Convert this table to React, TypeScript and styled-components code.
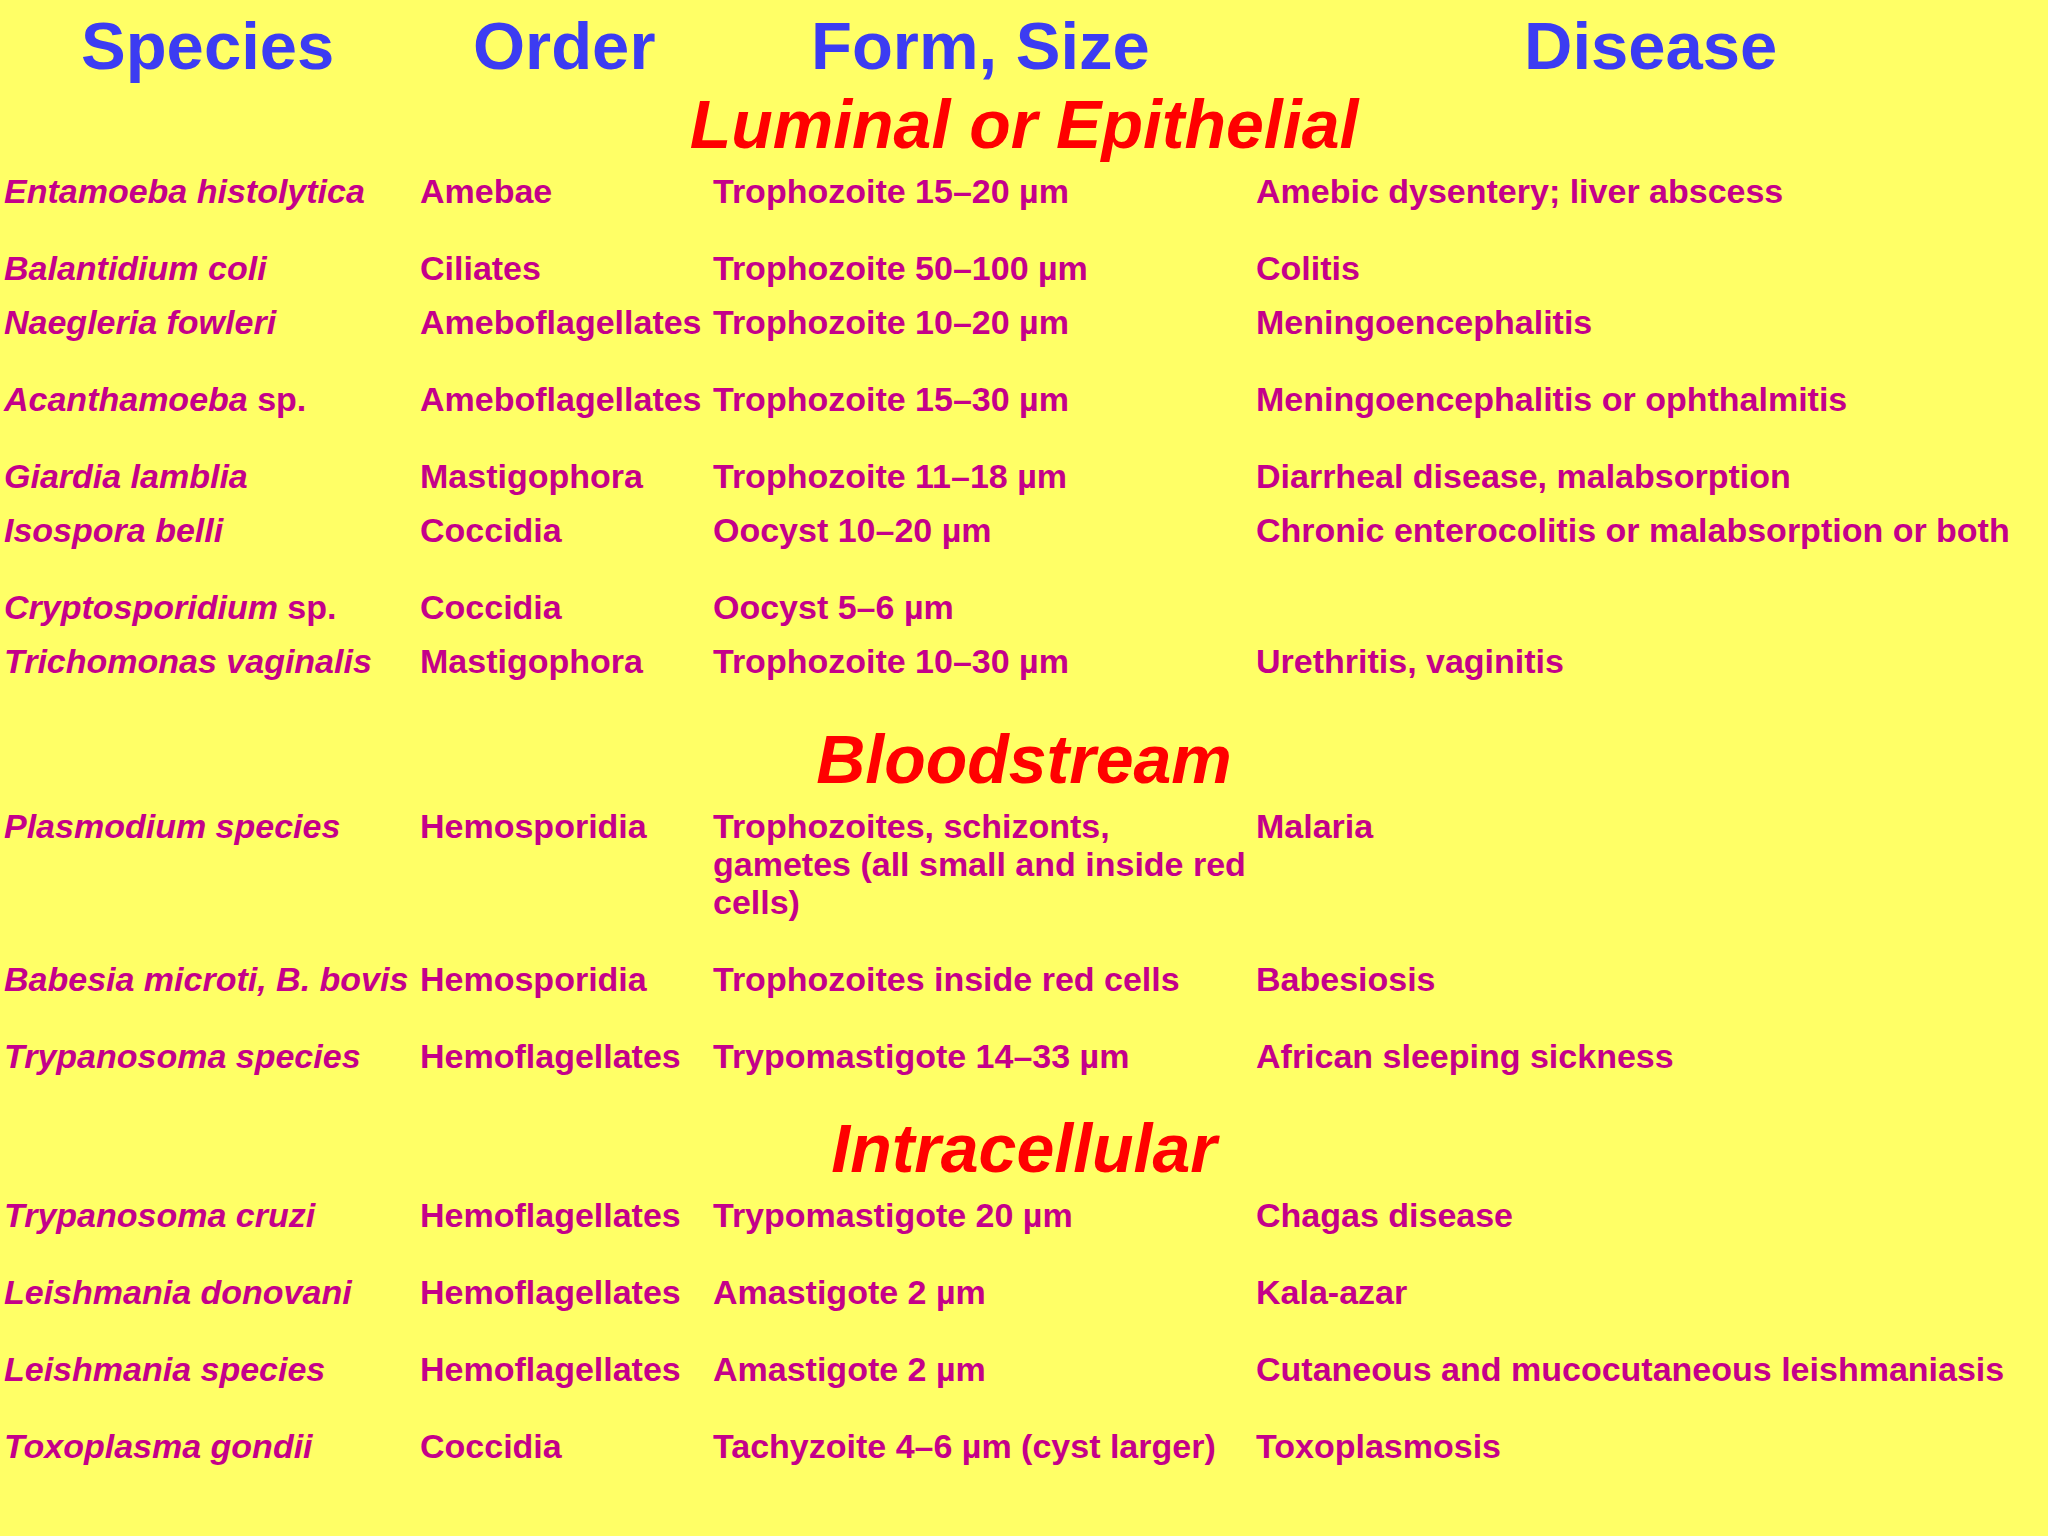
import React from 'react';
import styled, { createGlobalStyle } from 'styled-components';

const GlobalStyle = createGlobalStyle`
  html, body {
    margin: 0;
    padding: 0;
    background: #ffff66;
  }
  body {
    font-family: "Liberation Sans", Arial, sans-serif;
  }
`;

const Slide = styled.div`
  width: 2048px;
  height: 1536px;
  background: #ffff66;
  font-family: "Liberation Sans", Arial, sans-serif;
  font-weight: 700;
  overflow: hidden;
`;

const HeaderRow = styled.div`
  display: grid;
  grid-template-columns: 392px 338px 713px 1fr;
  padding: 10px 0 0 81px;
  margin-bottom: 6px;
`;

const HeaderCell = styled.div`
  color: #3c3cf2;
  font-size: 67px;
  line-height: 72px;
  white-space: nowrap;
`;

const SectionTitle = styled.h2<{ $top: number }>`
  margin: ${p => p.$top}px 0 12px;
  color: #ff0000;
  font-size: 68px;
  line-height: 72px;
  font-style: italic;
  font-weight: 700;
  text-align: center;
`;

const Row = styled.div<{ $tall?: boolean }>`
  display: grid;
  grid-template-columns: 416px 293px 543px 1fr;
  padding: 0 0 ${p => (p.$tall ? 39 : 16)}px 4px;
  color: #c4008a;
  font-size: 34px;
  line-height: 38px;
`;

const Cell = styled.div`
  white-space: nowrap;
`;

const SpeciesName = styled.span`
  font-style: italic;
`;

type Entry = {
  species: string;
  suffix?: string;
  order: string;
  form: React.ReactNode;
  disease: string;
  tall?: boolean;
};

const luminal: Entry[] = [
  { species: 'Entamoeba histolytica', order: 'Amebae', form: 'Trophozoite 15–20 µm', disease: 'Amebic dysentery; liver abscess', tall: true },
  { species: 'Balantidium coli', order: 'Ciliates', form: 'Trophozoite 50–100 µm', disease: 'Colitis' },
  { species: 'Naegleria fowleri', order: 'Ameboflagellates', form: 'Trophozoite 10–20 µm', disease: 'Meningoencephalitis', tall: true },
  { species: 'Acanthamoeba', suffix: ' sp.', order: 'Ameboflagellates', form: 'Trophozoite 15–30 µm', disease: 'Meningoencephalitis or ophthalmitis', tall: true },
  { species: 'Giardia lamblia', order: 'Mastigophora', form: 'Trophozoite 11–18 µm', disease: 'Diarrheal disease, malabsorption' },
  { species: 'Isospora belli', order: 'Coccidia', form: 'Oocyst 10–20 µm', disease: 'Chronic enterocolitis or malabsorption or both', tall: true },
  { species: 'Cryptosporidium', suffix: ' sp.', order: 'Coccidia', form: 'Oocyst 5–6 µm', disease: '' },
  { species: 'Trichomonas vaginalis', order: 'Mastigophora', form: 'Trophozoite 10–30 µm', disease: 'Urethritis, vaginitis', tall: true },
];

const bloodstream: Entry[] = [
  {
    species: 'Plasmodium species',
    order: 'Hemosporidia',
    form: (
      <>
        Trophozoites, schizonts,
        <br />
        gametes (all small and inside red
        <br />
        cells)
      </>
    ),
    disease: 'Malaria',
    tall: true,
  },
  { species: 'Babesia microti, B. bovis', order: 'Hemosporidia', form: 'Trophozoites inside red cells', disease: 'Babesiosis', tall: true },
  { species: 'Trypanosoma species', order: 'Hemoflagellates', form: 'Trypomastigote 14–33 µm', disease: 'African sleeping sickness', tall: true },
];

const intracellular: Entry[] = [
  { species: 'Trypanosoma cruzi', order: 'Hemoflagellates', form: 'Trypomastigote 20 µm', disease: 'Chagas disease', tall: true },
  { species: 'Leishmania donovani', order: 'Hemoflagellates', form: 'Amastigote 2 µm', disease: 'Kala-azar', tall: true },
  { species: 'Leishmania species', order: 'Hemoflagellates', form: 'Amastigote 2 µm', disease: 'Cutaneous and mucocutaneous leishmaniasis', tall: true },
  { species: 'Toxoplasma gondii', order: 'Coccidia', form: 'Tachyzoite 4–6 µm (cyst larger)', disease: 'Toxoplasmosis', tall: true },
];

const Rows = ({ items }: { items: Entry[] }) => (
  <>
    {items.map(e => (
      <Row key={e.species} $tall={e.tall}>
        <Cell>
          <SpeciesName>{e.species}</SpeciesName>
          {e.suffix}
        </Cell>
        <Cell>{e.order}</Cell>
        <Cell>{e.form}</Cell>
        <Cell>{e.disease}</Cell>
      </Row>
    ))}
  </>
);

export default function App() {
  return (
    <>
      <GlobalStyle />
      <Slide>
        <HeaderRow>
          <HeaderCell>Species</HeaderCell>
          <HeaderCell>Order</HeaderCell>
          <HeaderCell>Form, Size</HeaderCell>
          <HeaderCell>Disease</HeaderCell>
        </HeaderRow>
        <SectionTitle $top={6}>Luminal or Epithelial</SectionTitle>
        <Rows items={luminal} />
        <SectionTitle $top={4}>Bloodstream</SectionTitle>
        <Rows items={bloodstream} />
        <SectionTitle $top={-2}>Intracellular</SectionTitle>
        <Rows items={intracellular} />
      </Slide>
    </>
  );
}
